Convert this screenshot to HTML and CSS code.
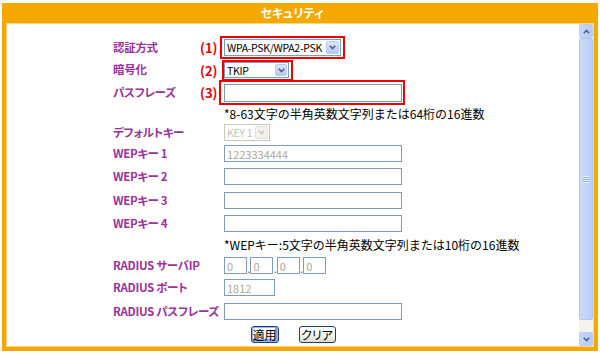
FILE: index.html
```html
<!DOCTYPE html>
<html lang="ja">
<head>
<meta charset="utf-8">
<title>セキュリティ</title>
<link rel="stylesheet" href="styles.css">
</head>
<body>
<div class="frame">
  <div class="title">セキュリティ</div>
  <div class="panel">
    <form class="main">
      <div class="grid">
        <label class="lbl">認証方式</label>
        <span class="num">(1)</span>
        <div class="ctl">
          <span class="mark mark1">
            <span class="select w-auth">
              <select><option>WPA-PSK/WPA2-PSK</option></select>
              <span class="arrow"><svg width="7" height="5" viewBox="0 0 7 5"><path d="M0.8 0.8 L3.5 3.6 L6.2 0.8"/></svg></span>
            </span>
          </span>
        </div>

        <label class="lbl">暗号化</label>
        <span class="num">(2)</span>
        <div class="ctl">
          <span class="mark mark2">
            <span class="select w-enc">
              <select><option>TKIP</option></select>
              <span class="arrow"><svg width="7" height="5" viewBox="0 0 7 5"><path d="M0.8 0.8 L3.5 3.6 L6.2 0.8"/></svg></span>
            </span>
          </span>
        </div>

        <label class="lbl">パスフレーズ</label>
        <span class="num">(3)</span>
        <div class="ctl">
          <span class="mark mark3"><input class="txt w-wide tall" type="text"></span>
        </div>

        <div class="note">*8-63文字の半角英数文字列または64桁の16進数</div>

        <label class="lbl">デフォルトキー</label>
        <div class="ctl">
          <span class="select w-key disabled">
            <select disabled><option>KEY 1</option></select>
            <span class="arrow"><svg width="7" height="5" viewBox="0 0 7 5"><path d="M0.8 0.8 L3.5 3.6 L6.2 0.8"/></svg></span>
          </span>
        </div>

        <label class="lbl">WEPキー 1</label>
        <div class="ctl"><input class="txt w-wide" type="text" value="1223334444" disabled></div>

        <label class="lbl">WEPキー 2</label>
        <div class="ctl"><input class="txt w-wide" type="text"></div>

        <label class="lbl">WEPキー 3</label>
        <div class="ctl"><input class="txt w-wide" type="text"></div>

        <label class="lbl">WEPキー 4</label>
        <div class="ctl"><input class="txt w-wide" type="text"></div>

        <div class="note">*WEPキー:5文字の半角英数文字列または10桁の16進数</div>

        <label class="lbl">RADIUS サーバIP</label>
        <div class="ctl ip">
          <input class="txt w-ip" type="text" value="0" disabled><span class="dot">.</span><input class="txt w-ip" type="text" value="0" disabled><span class="dot">.</span><input class="txt w-ip" type="text" value="0" disabled><span class="dot">.</span><input class="txt w-ip" type="text" value="0" disabled>
        </div>

        <label class="lbl">RADIUS ポート</label>
        <div class="ctl"><input class="txt w-port" type="text" value="1812" disabled></div>

        <label class="lbl">RADIUS パスフレーズ</label>
        <div class="ctl"><input class="txt w-wide" type="text"></div>
      </div>
      <div class="buttons">
        <button type="button" class="btn default">適用</button>
        <button type="button" class="btn">クリア</button>
      </div>
    </form>
    <div class="scrollbar">
      <div class="sb-btn"><svg width="7" height="5" viewBox="0 0 7 5"><path d="M0.8 4.2 L3.5 1.4 L6.2 4.2"/></svg></div>
      <div class="sb-thumb"><span class="grip"></span></div>
      <div class="sb-track"></div>
      <div class="sb-btn"><svg width="7" height="5" viewBox="0 0 7 5"><path d="M0.8 0.8 L3.5 3.6 L6.2 0.8"/></svg></div>
    </div>
  </div>
</div>
</body>
</html>
```

FILE: styles.css
```css
html, body {
  margin: 0;
  padding: 0;
  background: #ffffff;
}

body {
  font-family: "Noto Sans CJK JP", "Liberation Sans", sans-serif;
  font-size: 12px;
  color: #000;
}

.frame {
  box-sizing: border-box;
  width: 596px;
  height: 348px;
  margin: 3px 2px 0;
  padding: 0 4px 4px;
  background: #f5a800;
  display: flex;
  flex-direction: column;
}

.title {
  height: 20px;
  flex: none;
  display: flex;
  align-items: center;
  justify-content: center;
  padding-right: 16px;
  color: #fff;
  font-weight: bold;
  font-size: 12px;
  line-height: 1;
  font-feature-settings: "palt";
}

.panel {
  flex: 1;
  min-height: 0;
  border: 1px solid #ffd684;
  background: #fff;
  display: flex;
}

.main {
  flex: 1;
  margin: 0;
  padding-top: 12px;
  display: flex;
  flex-direction: column;
}

.grid {
  margin-left: 106px;
  display: grid;
  grid-template-columns: 84px 27px 1fr;
  grid-template-rows: 23px 22px 23px 19px 19px 23px 23.5px 23.5px 23.5px 19.5px 21px 23.5px 23.5px;
  align-items: center;
}

.lbl {
  grid-column: 1;
  color: #993399;
  font-weight: bold;
  font-size: 11.5px;
  letter-spacing: -0.3px;
  line-height: 1;
  white-space: nowrap;
  font-feature-settings: "palt";
}

.num {
  grid-column: 2;
  padding-left: 3px;
  color: #e60000;
  font-weight: bold;
  font-size: 13px;
  line-height: 1;
}

.ctl {
  grid-column: 3;
  display: flex;
  align-items: center;
}

.note {
  grid-column: 3;
  font-size: 12px;
  line-height: 1;
  white-space: nowrap;
}

/* red annotation boxes drawn over the controls */
.mark {
  position: relative;
  display: inline-flex;
}
.mark::after {
  content: "";
  position: absolute;
  border: 2px solid #ee0000;
  pointer-events: none;
}
.mark1::after { top: -3px; left: -4px; right: -4px; bottom: -3px; }
.mark2::after { top: -2px; left: -2px; right: -4px; bottom: -3px; }
.mark3::after { top: -4px; left: -5px; right: -3px; bottom: -3px; }

/* select boxes */
.select {
  box-sizing: border-box;
  display: inline-flex;
  align-items: center;
  height: 17px;
  padding: 1px;
  border: 1px solid #7f9db9;
  background: #fff;
}
.select select {
  flex: 1;
  min-width: 0;
  height: 100%;
  margin: 0;
  padding: 0 0 0 1px;
  border: 0;
  background: transparent;
  -webkit-appearance: none;
  appearance: none;
  font-family: "Noto Sans CJK JP", sans-serif;
  font-size: 10.5px;
  letter-spacing: -0.3px;
  line-height: 13px;
  color: #000;
}
.select .arrow {
  box-sizing: border-box;
  flex: none;
  width: 13px;
  height: 13px;
  border: 1px solid #b9cbf3;
  border-radius: 2px;
  background: linear-gradient(#dbe5fd, #b6c9f6);
  display: flex;
  align-items: center;
  justify-content: center;
}
.arrow svg path,
.sb-btn svg path {
  fill: none;
  stroke: #4d6185;
  stroke-width: 1.6;
}
.w-auth { width: 117px; }
.w-enc { width: 65px; height: 16px; }
.w-enc .arrow { width: 12px; height: 12px; }
.w-key { width: 46px; }

.select.disabled {
  border-color: #c9c7ba;
}
.select.disabled select {
  color: #aca899;
}
.select.disabled .arrow {
  border-color: #e3e1d8;
  background: #f2f1ec;
}
.select.disabled .arrow svg path {
  stroke: #c9c7ba;
}

/* text inputs */
.txt {
  box-sizing: border-box;
  height: 17px;
  margin: 0;
  padding: 0 2px;
  border: 1px solid #7f9db9;
  background: #fff;
  font-family: "Noto Sans CJK JP", sans-serif;
  font-size: 11px;
  color: #000;
  outline: none;
}
.txt:disabled {
  color: #aca899;
  background: #fff;
  -webkit-text-fill-color: #aca899;
}
.txt.tall { height: 18px; }
.w-wide { width: 178px; }
.w-ip { width: 23px; }
.w-port { width: 51px; }

.dot {
  width: 3.4px;
  font-size: 11px;
  line-height: 1;
  align-self: flex-end;
  color: #666;
  overflow: visible;
  text-indent: 0.3px;
}

/* buttons */
.buttons {
  flex: 1;
  display: flex;
  align-items: center;
  justify-content: center;
  gap: 20px;
}
.btn {
  box-sizing: border-box;
  height: 17px;
  margin: 0;
  padding: 0;
  border: 1px solid #1c3f7a;
  border-radius: 3px;
  background: linear-gradient(#ffffff 0%, #f6f5f0 55%, #dedbcc 100%);
  font-family: "Noto Sans CJK JP", sans-serif;
  font-size: 12px;
  line-height: 1;
  color: #000;
  white-space: nowrap;
  font-feature-settings: "palt";
  display: inline-flex;
  align-items: center;
  justify-content: center;
}
.btn.default {
  width: 28px;
  box-shadow: inset 0 0 0 1px #97b8f0, inset -1px -1px 0 2px #7aa0e4;
}
.btn + .btn {
  width: 37px;
}

/* scrollbar */
.scrollbar {
  flex: none;
  width: 14px;
  display: flex;
  flex-direction: column;
  background: #f4f3ee;
}
.sb-btn {
  box-sizing: border-box;
  height: 14px;
  flex: none;
  border: 1px solid #bccef5;
  border-radius: 2px;
  background: linear-gradient(90deg, #c6d6fc, #b8cbf7);
  display: flex;
  align-items: center;
  justify-content: center;
}
.sb-thumb {
  box-sizing: border-box;
  flex: none;
  height: 282px;
  border: 1px solid #b3c7f6;
  border-radius: 2px;
  background: linear-gradient(90deg, #cbd9fd, #bccff9);
  display: flex;
  align-items: center;
  justify-content: center;
}
.grip {
  width: 6px;
  height: 7px;
  background: repeating-linear-gradient(#eef3ff 0 1px, #8faae8 1px 2px);
}
.sb-track {
  flex: 1;
}
```
